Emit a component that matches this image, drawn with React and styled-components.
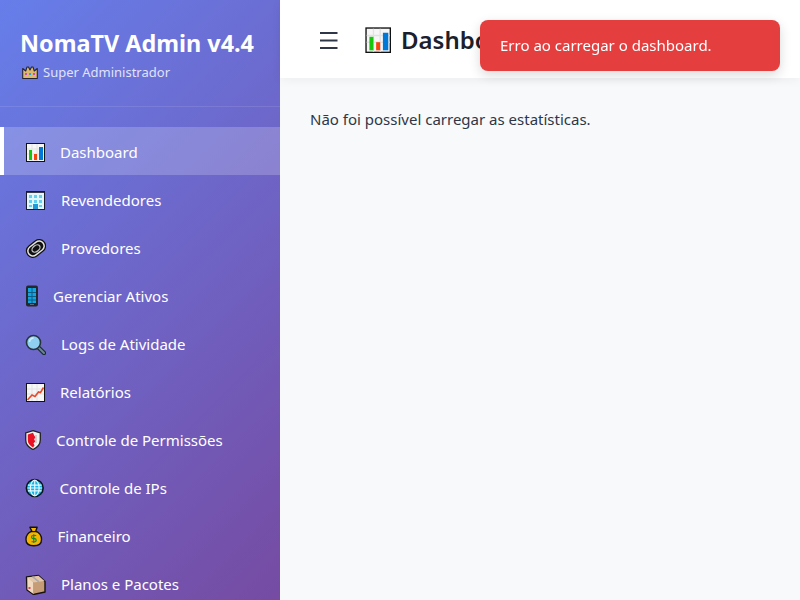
import React from 'react';
import styled, { createGlobalStyle } from 'styled-components';

const GlobalStyle = createGlobalStyle`
  * {
    box-sizing: border-box;
  }
  html,
  body {
    margin: 0;
    height: 100%;
    overflow: hidden;
  }
  body {
    font-family: 'Noto Sans', 'Open Sans', sans-serif;
    background: #f8f9fa;
    color: #2d3748;
  }
`;

const Layout = styled.div`
  display: flex;
  height: 600px;
  overflow: hidden;
`;

const Sidebar = styled.aside`
  width: 280px;
  flex-shrink: 0;
  height: 100%;
  overflow: hidden;
  color: #fff;
  background: linear-gradient(135deg, #667eea 0%, #764ba2 100%);
`;

const Brand = styled.div`
  padding: 27px 20px 25px;
  border-bottom: 1px solid rgba(255, 255, 255, 0.1);
`;

const BrandTitle = styled.h1`
  margin: 0 0 4px;
  font-size: 23.4px;
  line-height: 32px;
  font-weight: 700;
  white-space: nowrap;
`;

const BrandRole = styled.p`
  margin: 0;
  padding-left: 2px;
  display: flex;
  align-items: center;
  gap: 5px;
  font-size: 13px;
  line-height: 18px;
  opacity: 0.8;
`;

const Nav = styled.nav`
  padding-top: 20px;
`;

const NavItem = styled.a`
  display: flex;
  align-items: center;
  gap: 15px;
  height: 48px;
  padding-top: 2px;
  padding-left: ${(p) => (p.$active ? '21px' : '25px')};
  border-left: ${(p) => (p.$active ? '4px solid #fff' : 'none')};
  background: ${(p) => (p.$active ? 'rgba(255, 255, 255, 0.2)' : 'transparent')};
  color: #fff;
  font-size: 15px;
  white-space: nowrap;
`;

const IconSlot = styled.span`
  display: flex;
  flex-shrink: 0;
  width: ${(p) => p.$w}px;
`;

const Main = styled.main`
  flex: 1;
  min-width: 0;
`;

const Topbar = styled.header`
  display: flex;
  align-items: center;
  height: 78px;
  padding: 0 30px;
  gap: 15px;
  background: #fff;
  box-shadow: 0 2px 10px rgba(0, 0, 0, 0.05);
`;

const MenuButton = styled.button`
  border: none;
  background: none;
  padding: 3px 10px 0;
  display: flex;
`;

const Title = styled.h2`
  margin: 0 0 0 1px;
  display: flex;
  align-items: center;
  gap: 10px;
  font-size: 24px;
  font-weight: 600;
  color: #1a202c;
  white-space: nowrap;
`;

const Content = styled.div`
  padding: 30px;
  font-size: 15px;
  line-height: 22px;
`;

const Toast = styled.div`
  position: fixed;
  top: 20px;
  right: 20px;
  width: 300px;
  height: 51px;
  padding: 0 20px 1px;
  display: flex;
  align-items: center;
  border-radius: 8px;
  background: #e53e3e;
  color: #fff;
  font-size: 15px;
  box-shadow: 0 4px 12px rgba(0, 0, 0, 0.15);
`;

const ChartIcon = ({ size = 20 }) => (
  <svg width={size} height={size} viewBox='0 0 20 20'>
    <rect x='1.5' y='1.5' width='18' height='18' fill='#f6f6f6' stroke='#111' />
    <path d='M2 7h17M2 12h17M7 2v17M12 2v17' stroke='#e2e2e2' />
    <rect x='4' y='8' width='3' height='10' fill='#16c60c' />
    <rect x='9' y='12' width='3' height='6' fill='#f7430c' />
    <rect x='14' y='5' width='4' height='13' fill='#0078d7' />
  </svg>
);

const BuildingIcon = () => (
  <svg width='21' height='20' viewBox='0 0 21 20'>
    <rect x='1.5' y='1.5' width='18' height='18' fill='#e2f5fb' stroke='#1a1a2e' />
    <rect x='2' y='2' width='17' height='1' fill='#3a3a4a' />
    <path d='M4 5h3v3H4zM9 5h3v3H9zM14 5h3v3h-3zM4 10h3v3H4zM9 10h3v3H9zM14 10h3v3h-3zM4 15h3v2H4zM14 15h3v2h-3z' fill='#5fd0f2' />
    <rect x='8' y='14' width='5' height='5' fill='#1e9ad6' />
  </svg>
);

const LinkIcon = () => (
  <svg width='21' height='21' viewBox='0 0 21 21'>
    <g transform='rotate(-38 11 10.500)' fill='none'>
      <rect x='0' y='3.500' width='22' height='14' rx='7' fill='#111' />
      <rect x='2' y='5.500' width='18' height='10' rx='5' stroke='#e4e4e4' strokeWidth='1.500' />
      <ellipse cx='11' cy='10.500' rx='4.500' ry='3' stroke='#bdbdbd' strokeWidth='1.300' />
    </g>
  </svg>
);

const PhoneIcon = () => (
  <svg width='13' height='22' viewBox='0 0 13 22'>
    <rect x='1' y='0.5' width='12' height='21' rx='2' fill='#23272e' />
    <rect x='3' y='3' width='8' height='15' fill='#0ea5e0' />
    <path d='M3 7.5h8M3 11.5h8M3 15h8M7 3v15' stroke='#0b5c86' />
    <rect x='5' y='19' width='4' height='1' fill='#667' />
  </svg>
);

const SearchIcon = () => (
  <svg width='21' height='21' viewBox='0 0 21 21'>
    <path d='M13 13l6 6' stroke='#1d2a30' strokeWidth='4.4' strokeLinecap='round' />
    <path d='M13.5 13.5l5.5 5.5' stroke='#6b8791' strokeWidth='2' strokeLinecap='round' />
    <circle cx='8.5' cy='8.5' r='7' fill='#8fd0f2' stroke='#26343c' strokeWidth='1.6' />
    <path d='M4.5 8a4 4 0 0 1 4-4' fill='none' stroke='#d4eefb' strokeWidth='1.5' />
  </svg>
);

const TrendIcon = () => (
  <svg width='20' height='20' viewBox='0 0 20 20'>
    <rect x='1.5' y='1.5' width='18' height='18' fill='#f6f6f6' stroke='#111' />
    <path d='M2 7h17M2 12h17M7 2v17M12 2v17' stroke='#e2e2e2' />
    <path d='M2.5 18l4.5-5 3 1.5 3.5-4.5 2 .5 3-5' fill='none' stroke='#ea4a28' strokeWidth='1.6' />
  </svg>
);

const ShieldIcon = () => (
  <svg width='16' height='20' viewBox='0 0 16 20'>
    <path d='M8 0.700l7.300 2.300v7c0 4.200-3 7.500-7.300 9.500C3.700 17.500 0.700 14.200 0.700 10V3z' fill='#f0f0f0' stroke='#222' strokeWidth='1.300' />
    <path d='M8 2.800L2.800 4.400v5.800c0 3 2.100 5.600 5.200 7.200l1.500-2-1-2.200 1.800-1.800-1.300-2.200 1.500-1.800-1.300-2z' fill='#e81123' />
    <path d='M11 5v8' stroke='#c9c9c9' strokeWidth='1.500' />
  </svg>
);

const GlobeIcon = () => (
  <svg width='19.500' height='20' viewBox='0 0 20 20'>
    <circle cx='10' cy='10' r='8.600' fill='#12b3e6' stroke='#08131a' strokeWidth='1.600' />
    <path d='M3 7h14M2.500 10h15M3 13h14M10 2v16' stroke='#e6f9ff' strokeWidth='1.200' />
    <ellipse cx='10' cy='10' rx='4.500' ry='8' fill='none' stroke='#e6f9ff' strokeWidth='1.200' />
  </svg>
);

const MoneyIcon = () => (
  <svg width='17.500' height='21' viewBox='0 0 18 21'>
    <path d='M5 1h7.500l-1.500 4c3.500 1.500 6 4.500 6 8.500 0 4-3 6.500-8 6.500s-8-2.500-8-6.500C1 9.500 3.500 6.500 7 5z' fill='#f5b400' stroke='#15120a' strokeWidth='1.400' strokeLinejoin='round' />
    <path d='M5.500 5.500h7' stroke='#15120a' strokeWidth='1.200' />
    <path d='M11.500 9.500H8.300a1.500 1.500 0 0 0 0 3.200h1.600a1.500 1.500 0 0 1 0 3.200H6.700M9 8.300v9' fill='none' stroke='#0f8a2a' strokeWidth='1.200' />
  </svg>
);

const BoxIcon = () => (
  <svg width='21' height='21' viewBox='0 0 21 21'>
    <path d='M1.500 3L13.500 1.500 20 7.500V18l-11.500 2.500L2 16z' fill='#c69c77' stroke='#17120e' strokeWidth='1.400' strokeLinejoin='round' />
    <path d='M2 3.500l6.500 5 11-1.500-6-5.300z' fill='#e4c7a8' />
    <path d='M8.500 8.500v11.500' stroke='#8a6a4e' />
    <path d='M2.500 3.500l6 5V20L2.500 15.500z' fill='#f0d9bf' />
    <path d='M7.500 2.700l6.500 5.200' stroke='#a8a8b0' strokeWidth='1.500' />
    <rect x='3.500' y='13' width='2' height='2' fill='#e0455a' />
  </svg>
);

const CrownIcon = () => (
  <svg width='16' height='13' viewBox='0 0 16 13'>
    <path d='M0.700 2.500l3 2.500L5 1h1.500L8 4l1.500-3H11l1.300 4 3-2.500v10H0.700z' fill='#fcc94f' stroke='#14100a' strokeWidth='1.100' strokeLinejoin='round' />
    <rect x='3' y='7' width='2' height='2' fill='#e040c8' />
    <rect x='7' y='7' width='2' height='2' fill='#14b0e4' />
    <rect x='11' y='7' width='2' height='2' fill='#e040c8' />
  </svg>
);

const MenuIcon = () => (
  <svg width='18' height='17' viewBox='0 0 18 17'>
    <path d='M0 1h17.500M0 8.500h17.500M0 16h17.500' stroke='#2d3748' strokeWidth='2' />
  </svg>
);

const items = [
  [ChartIcon, 20, 'Dashboard'],
  [BuildingIcon, 21, 'Revendedores'],
  [LinkIcon, 21, 'Provedores'],
  [PhoneIcon, 13, 'Gerenciar Ativos'],
  [SearchIcon, 21, 'Logs de Atividade'],
  [TrendIcon, 20, 'Relatórios'],
  [ShieldIcon, 16, 'Controle de Permissões'],
  [GlobeIcon, 19.5, 'Controle de IPs'],
  [MoneyIcon, 17.5, 'Financeiro'],
  [BoxIcon, 21, 'Planos e Pacotes'],
];

export default function App() {
  return (
    <Layout>
      <GlobalStyle />
      <Sidebar>
        <Brand>
          <BrandTitle>NomaTV Admin v4.4</BrandTitle>
          <BrandRole>
            <CrownIcon />
            Super Administrador
          </BrandRole>
        </Brand>
        <Nav>
          {items.map(([Icon, w, label], i) => (
            <NavItem key={label} $active={i === 0}>
              <IconSlot $w={w}>
                <Icon />
              </IconSlot>
              {label}
            </NavItem>
          ))}
        </Nav>
      </Sidebar>
      <Main>
        <Topbar>
          <MenuButton>
            <MenuIcon />
          </MenuButton>
          <Title>
            <ChartIcon size={27} />
            Dashboard
          </Title>
        </Topbar>
        <Content>Não foi possível carregar as estatísticas.</Content>
      </Main>
      <Toast>Erro ao carregar o dashboard.</Toast>
    </Layout>
  );
}
